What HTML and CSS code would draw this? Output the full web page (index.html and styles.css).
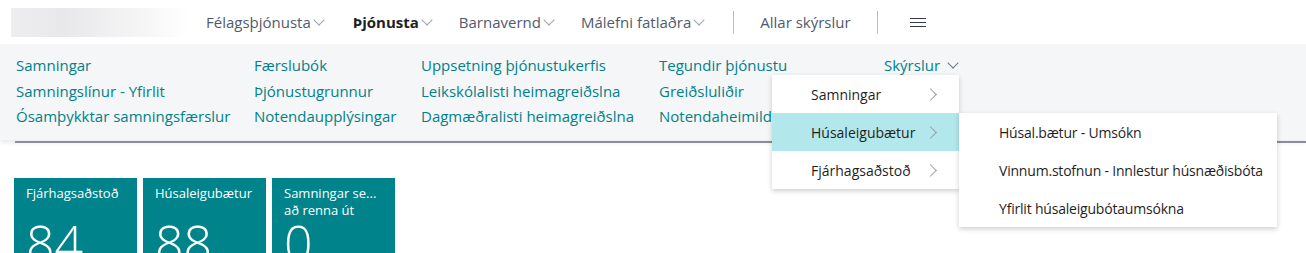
FILE: index.html
```html
<!DOCTYPE html>
<html lang="is">
<head>
  <meta charset="UTF-8" />
  <title>Þjónusta</title>
  <link rel="stylesheet" href="styles.css">
</head>
<body>

  <!-- efsta stika -->
  <header class="topbar">
    <div class="logo"></div>
    <nav class="mainnav">
      <a class="nav-item">Félagsþjónusta<span class="chev"></span></a>
      <a class="nav-item active">Þjónusta<span class="chev"></span></a>
      <a class="nav-item">Barnavernd<span class="chev"></span></a>
      <a class="nav-item">Málefni fatlaðra<span class="chev"></span></a>
      <span class="divider"></span>
      <a class="nav-item plain">Allar skýrslur</a>
      <span class="divider"></span>
      <span class="burger"><span></span><span></span><span></span></span>
    </nav>
  </header>

  <!-- undirvalmynd -->
  <section class="band">
    <div class="links">
      <div class="col c1">
        <a>Samningar</a>
        <a>Samningslínur - Yfirlit</a>
        <a>Ósamþykktar samningsfærslur</a>
      </div>
      <div class="col c2">
        <a>Færslubók</a>
        <a>Þjónustugrunnur</a>
        <a>Notendaupplýsingar</a>
      </div>
      <div class="col c3">
        <a>Uppsetning þjónustukerfis</a>
        <a>Leikskólalisti heimagreiðslna</a>
        <a>Dagmæðralisti heimagreiðslna</a>
      </div>
      <div class="col c4">
        <a>Tegundir þjónustu</a>
        <a>Greiðsluliðir</a>
        <a>Notendaheimildir</a>
      </div>
      <div class="col c5">
        <a>Skýrslur<span class="chev teal"></span></a>
      </div>
    </div>
  </section>
  <div class="rule"></div>

  <!-- reitir -->
  <main class="tiles">
    <div class="tile">
      <div class="tile-title">Fjárhagsaðstoð</div>
      <div class="tile-num">84</div>
    </div>
    <div class="tile">
      <div class="tile-title">Húsaleigubætur</div>
      <div class="tile-num">88</div>
    </div>
    <div class="tile">
      <div class="tile-title">Samningar se...<br>að renna út</div>
      <div class="tile-num">0</div>
    </div>
  </main>

  <!-- fellivalmynd -->
  <div class="dropdown">
    <div class="dd-item">Samningar<span class="arrow"></span></div>
    <div class="dd-item selected">Húsaleigubætur<span class="arrow"></span></div>
    <div class="dd-item">Fjárhagsaðstoð<span class="arrow"></span></div>
  </div>
  <div class="submenu">
    <div class="dd-item">Húsal.bætur - Umsókn</div>
    <div class="dd-item">Vinnum.stofnun - Innlestur húsnæðisbóta</div>
    <div class="dd-item">Yfirlit húsaleigubótaumsókna</div>
  </div>

</body>
</html>
```

FILE: styles.css
```css
body {
  margin: 0;
  font-family: 'Open Sans', 'Noto Sans', sans-serif;
  font-size: 14px;
  background: #fff;
  overflow: hidden;
  position: relative;
  width: 1306px;
  height: 253px;
}

a {
  cursor: pointer;
}

/* efsta stika */
.topbar {
  height: 44px;
  display: flex;
  align-items: center;
  background: #fff;
}

.logo {
  width: 178px;
  height: 29px;
  margin: 1px 0 0 11px;
  background: linear-gradient(to right, #eeeef0, #e8e8ea 30%, #f6f6f7 75%, #fff);
}

.mainnav {
  display: flex;
  align-items: center;
  margin-left: 17px;
  height: 100%;
}

.nav-item {
  color: #4f5b6c;
  font-size: 15px;
  margin-right: 28px;
  display: flex;
  align-items: center;
  white-space: nowrap;
}

.nav-item.active {
  color: #1f1f1f;
  font-weight: 700;
  margin-left: 2px;
}

.nav-item.plain {
  margin: 0 24px 0 26px;
}

.chev {
  display: inline-block;
  width: 7px;
  height: 7px;
  border-right: 1px solid #a0a4ab;
  border-bottom: 1px solid #a0a4ab;
  transform: rotate(45deg);
  margin: -5px 0 0 4px;
}

.chev.teal {
  border-color: #6a7a88;
  margin-left: 9px;
}

.divider {
  width: 1px;
  height: 23px;
  background: #b9bcc2;
  margin-left: 2px;
}

.burger {
  display: flex;
  flex-direction: column;
  gap: 3px;
  width: 16px;
  margin-left: 32px;
}

.burger span {
  height: 1px;
  background: #333c48;
}

/* undirvalmynd */
.band {
  height: 96px;
  background: #f5f6f8;
  box-shadow: 0 3px 4px rgba(0, 0, 0, 0.08);
}

.links {
  display: flex;
  padding: 9px 0 0 16px;
}

.col {
  display: flex;
  flex-direction: column;
}

.col a {
  color: #00818a;
  font-size: 15px;
  line-height: 25.5px;
  white-space: nowrap;
  display: flex;
  align-items: center;
}

.c1 { width: 238px; }
.c2 { width: 167px; }
.c3 { width: 238px; }
.c4 { width: 225px; }

.rule {
  height: 2px;
  margin: 1px 0 0 15px;
  background: #8b8e97;
}

/* reitir */
.tiles {
  display: flex;
  gap: 6px;
  padding: 35px 0 0 14px;
}

.tile {
  width: 123px;
  height: 90px;
  background: #00838a;
  color: #fff;
  padding: 7px 12px 0;
  box-sizing: border-box;
  overflow: hidden;
}

.tile-title {
  font-size: 13px;
  line-height: 17px;
  height: 34px;
}

.tile-num {
  font-size: 50px;
  font-weight: 300;
  line-height: 44px;
  margin-top: 2px;
}

/* fellivalmynd */
.dropdown,
.submenu {
  position: absolute;
  background: #fff;
  box-shadow: 0 2px 5px rgba(0, 0, 0, 0.2);
  z-index: 10;
}

.dropdown {
  left: 772px;
  top: 75px;
  width: 187px;
}

.submenu {
  left: 959px;
  top: 113px;
  width: 318px;
}

.dd-item {
  height: 38px;
  display: flex;
  align-items: center;
  justify-content: space-between;
  padding: 0 24px 0 39px;
  color: #1f1f1f;
  font-size: 14px;
  white-space: nowrap;
}

.submenu .dd-item {
  padding-left: 40px;
  letter-spacing: -0.2px;
}

.dd-item.selected {
  background: #b2e8eb;
}

.arrow {
  width: 8px;
  height: 8px;
  border-right: 1px solid #9a9ea5;
  border-top: 1px solid #9a9ea5;
  transform: rotate(45deg);
}
```
